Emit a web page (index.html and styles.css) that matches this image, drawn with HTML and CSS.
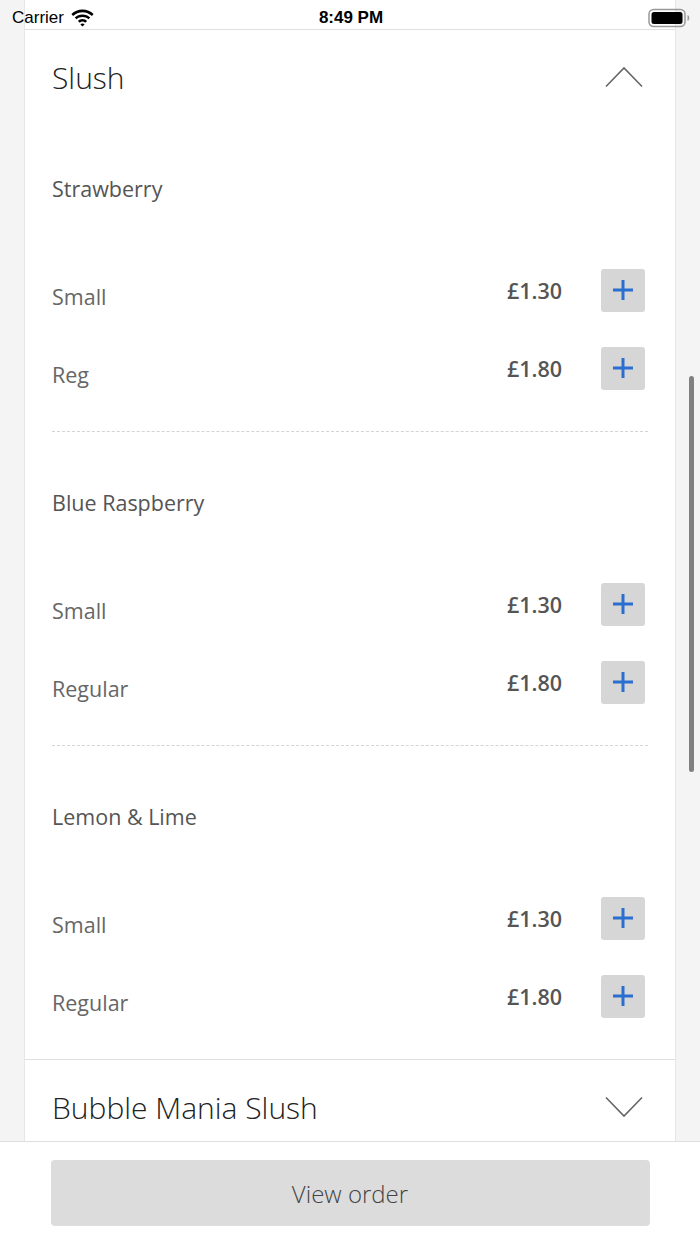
FILE: index.html
```html
<!DOCTYPE html>
<html lang="en">
<head>
    <meta charset="UTF-8">
    <title>Slush menu</title>
    <link rel="stylesheet" href="styles.css">
</head>
<body>
    <div class="statusbar">
        <div class="carrier">
            Carrier
            <svg width="25" height="18" viewBox="0 0 25 18">
                <path d="M12.5 3.2c3.6 0 6.9 1.4 9.4 3.7l1.7-1.8C20.6 2.3 16.7.6 12.5.6S4.4 2.3 1.4 5.1l1.7 1.8c2.5-2.3 5.8-3.7 9.4-3.7z" fill="#000"/>
                <path d="M12.5 8c2.3 0 4.4.9 6 2.3l1.7-1.8c-2-1.9-4.7-3-7.7-3s-5.7 1.1-7.7 3l1.7 1.8c1.6-1.4 3.7-2.3 6-2.3z" fill="#000"/>
                <path d="M12.5 12.6c1.1 0 2 .4 2.7 1.1l1.8-1.8c-1.2-1.1-2.8-1.8-4.5-1.8s-3.3.7-4.5 1.8l1.8 1.8c.7-.7 1.6-1.1 2.7-1.1z" fill="#000"/>
                <path d="M12.5 17.6l2.1-2.2c-.5-.5-1.3-.8-2.1-.8s-1.6.3-2.1.8z" fill="#000"/>
            </svg>
        </div>
        <div class="clock">8:49 PM</div>
        <div class="power">
            <svg width="42" height="20" viewBox="0 0 42 20">
                <rect x="1" y="1.5" width="36" height="17" rx="4.5" fill="none" stroke="#999" stroke-width="1.5"/>
                <rect x="3.5" y="4" width="31" height="12" rx="2.5" fill="#000"/>
                <path d="M39.5 7v6c1.2-.4 1.8-1.6 1.8-3s-.6-2.6-1.8-3z" fill="#999"/>
            </svg>
        </div>
    </div>

    <main class="page">
        <div class="card">
            <section class="group">
                <div class="group-head">
                    <h2>Slush</h2>
                    <svg class="chevron" width="38" height="22" viewBox="0 0 38 22">
                        <path d="M1 20.5L19 2l18 18.5" fill="none" stroke="#666" stroke-width="1.6"/>
                    </svg>
                </div>

                <div class="flavour">
                    <h3>Strawberry</h3>
                    <div class="option">
                        <span class="size">Small</span>
                        <span class="price">£1.30</span>
                        <button class="add"><svg width="22" height="22" viewBox="0 0 22 22"><path d="M11 1v20M1 11h20" stroke="#2a6fd0" stroke-width="3"/></svg></button>
                    </div>
                    <div class="option">
                        <span class="size">Reg</span>
                        <span class="price">£1.80</span>
                        <button class="add"><svg width="22" height="22" viewBox="0 0 22 22"><path d="M11 1v20M1 11h20" stroke="#2a6fd0" stroke-width="3"/></svg></button>
                    </div>
                </div>

                <div class="flavour">
                    <h3>Blue Raspberry</h3>
                    <div class="option">
                        <span class="size">Small</span>
                        <span class="price">£1.30</span>
                        <button class="add"><svg width="22" height="22" viewBox="0 0 22 22"><path d="M11 1v20M1 11h20" stroke="#2a6fd0" stroke-width="3"/></svg></button>
                    </div>
                    <div class="option">
                        <span class="size">Regular</span>
                        <span class="price">£1.80</span>
                        <button class="add"><svg width="22" height="22" viewBox="0 0 22 22"><path d="M11 1v20M1 11h20" stroke="#2a6fd0" stroke-width="3"/></svg></button>
                    </div>
                </div>

                <div class="flavour">
                    <h3>Lemon &amp; Lime</h3>
                    <div class="option">
                        <span class="size">Small</span>
                        <span class="price">£1.30</span>
                        <button class="add"><svg width="22" height="22" viewBox="0 0 22 22"><path d="M11 1v20M1 11h20" stroke="#2a6fd0" stroke-width="3"/></svg></button>
                    </div>
                    <div class="option">
                        <span class="size">Regular</span>
                        <span class="price">£1.80</span>
                        <button class="add"><svg width="22" height="22" viewBox="0 0 22 22"><path d="M11 1v20M1 11h20" stroke="#2a6fd0" stroke-width="3"/></svg></button>
                    </div>
                </div>
            </section>

            <section class="group">
                <div class="group-head">
                    <h2>Bubble Mania Slush</h2>
                    <svg class="chevron" width="38" height="22" viewBox="0 0 38 22">
                        <path d="M1 1.5L19 20 37 1.5" fill="none" stroke="#666" stroke-width="1.6"/>
                    </svg>
                </div>
            </section>
        </div>
        <div class="scrollbar"></div>
    </main>

    <footer class="footer">
        <button class="view-order">View order</button>
    </footer>
</body>
</html>
```

FILE: styles.css
```css
html, body {
    margin: 0;
    padding: 0;
    height: 100%;
    overflow: hidden;
}

body {
    display: flex;
    flex-direction: column;
    background-color: #f4f4f4;
    font-family: "Open Sans", sans-serif;
    color: #555;
}

.statusbar {
    position: absolute;
    top: 0;
    left: 0;
    right: 0;
    height: 36px;
    display: flex;
    align-items: center;
    justify-content: space-between;
    padding: 0 10px 0 12px;
    font-family: "Liberation Sans", Arial, sans-serif;
    font-size: 17px;
    color: #000;
    z-index: 2;
}

.carrier {
    display: flex;
    align-items: center;
    gap: 6px;
    width: 140px;
}

.clock {
    font-weight: bold;
}

.power {
    width: 140px;
    display: flex;
    justify-content: flex-end;
}

.page {
    flex: 1;
    position: relative;
    overflow: hidden;
}

.card {
    margin: 0 24px;
    padding-top: 29px;
    background-color: #fff;
    border-left: 1px solid #e6e6e6;
    border-right: 1px solid #e6e6e6;
}

.group {
    border-top: 1px solid #e0e0e0;
}

.group-head {
    height: 82px;
    padding: 6px 32px 0 27px;
    display: flex;
    align-items: center;
    justify-content: space-between;
}

.group-head h2 {
    margin: 0;
    font-size: 30px;
    font-weight: 300;
    color: #222;
}

.chevron {
    display: block;
}

.flavour {
    margin: 0 27px;
    padding: 57px 0 41px;
    border-bottom: 1px dashed #d4d4d4;
}

.flavour:last-child {
    border-bottom: none;
    padding-bottom: 41px;
}

.flavour h3 {
    margin: 0 0 65px;
    font-size: 21.5px;
    line-height: 28px;
    font-weight: 500;
    color: #555;
}

.option {
    display: flex;
    align-items: center;
    height: 44px;
}

.option + .option {
    margin-top: 34px;
}

.size {
    flex: 1;
    padding-top: 13px;
    font-size: 21.5px;
    color: #666;
}

.price {
    font-size: 21.5px;
    font-weight: 600;
    color: #555;
    margin-right: 39px;
}

.add {
    width: 44px;
    height: 43px;
    margin-right: 3px;
    border: none;
    border-radius: 3px;
    background-color: #d6d6d6;
    display: flex;
    align-items: center;
    justify-content: center;
    padding: 0;
}

.scrollbar {
    position: absolute;
    top: 376px;
    right: 6px;
    width: 5px;
    height: 396px;
    border-radius: 3px;
    background-color: #808080;
}

.footer {
    height: 103px;
    background-color: #fff;
    border-top: 1px solid #dedede;
    display: flex;
    justify-content: center;
    padding-top: 18px;
    box-sizing: border-box;
}

.view-order {
    width: 599px;
    height: 66px;
    border: none;
    border-radius: 4px;
    background-color: #dcdcdc;
    font-family: "Open Sans", sans-serif;
    font-size: 24px;
    font-weight: 300;
    color: #444;
}
```
